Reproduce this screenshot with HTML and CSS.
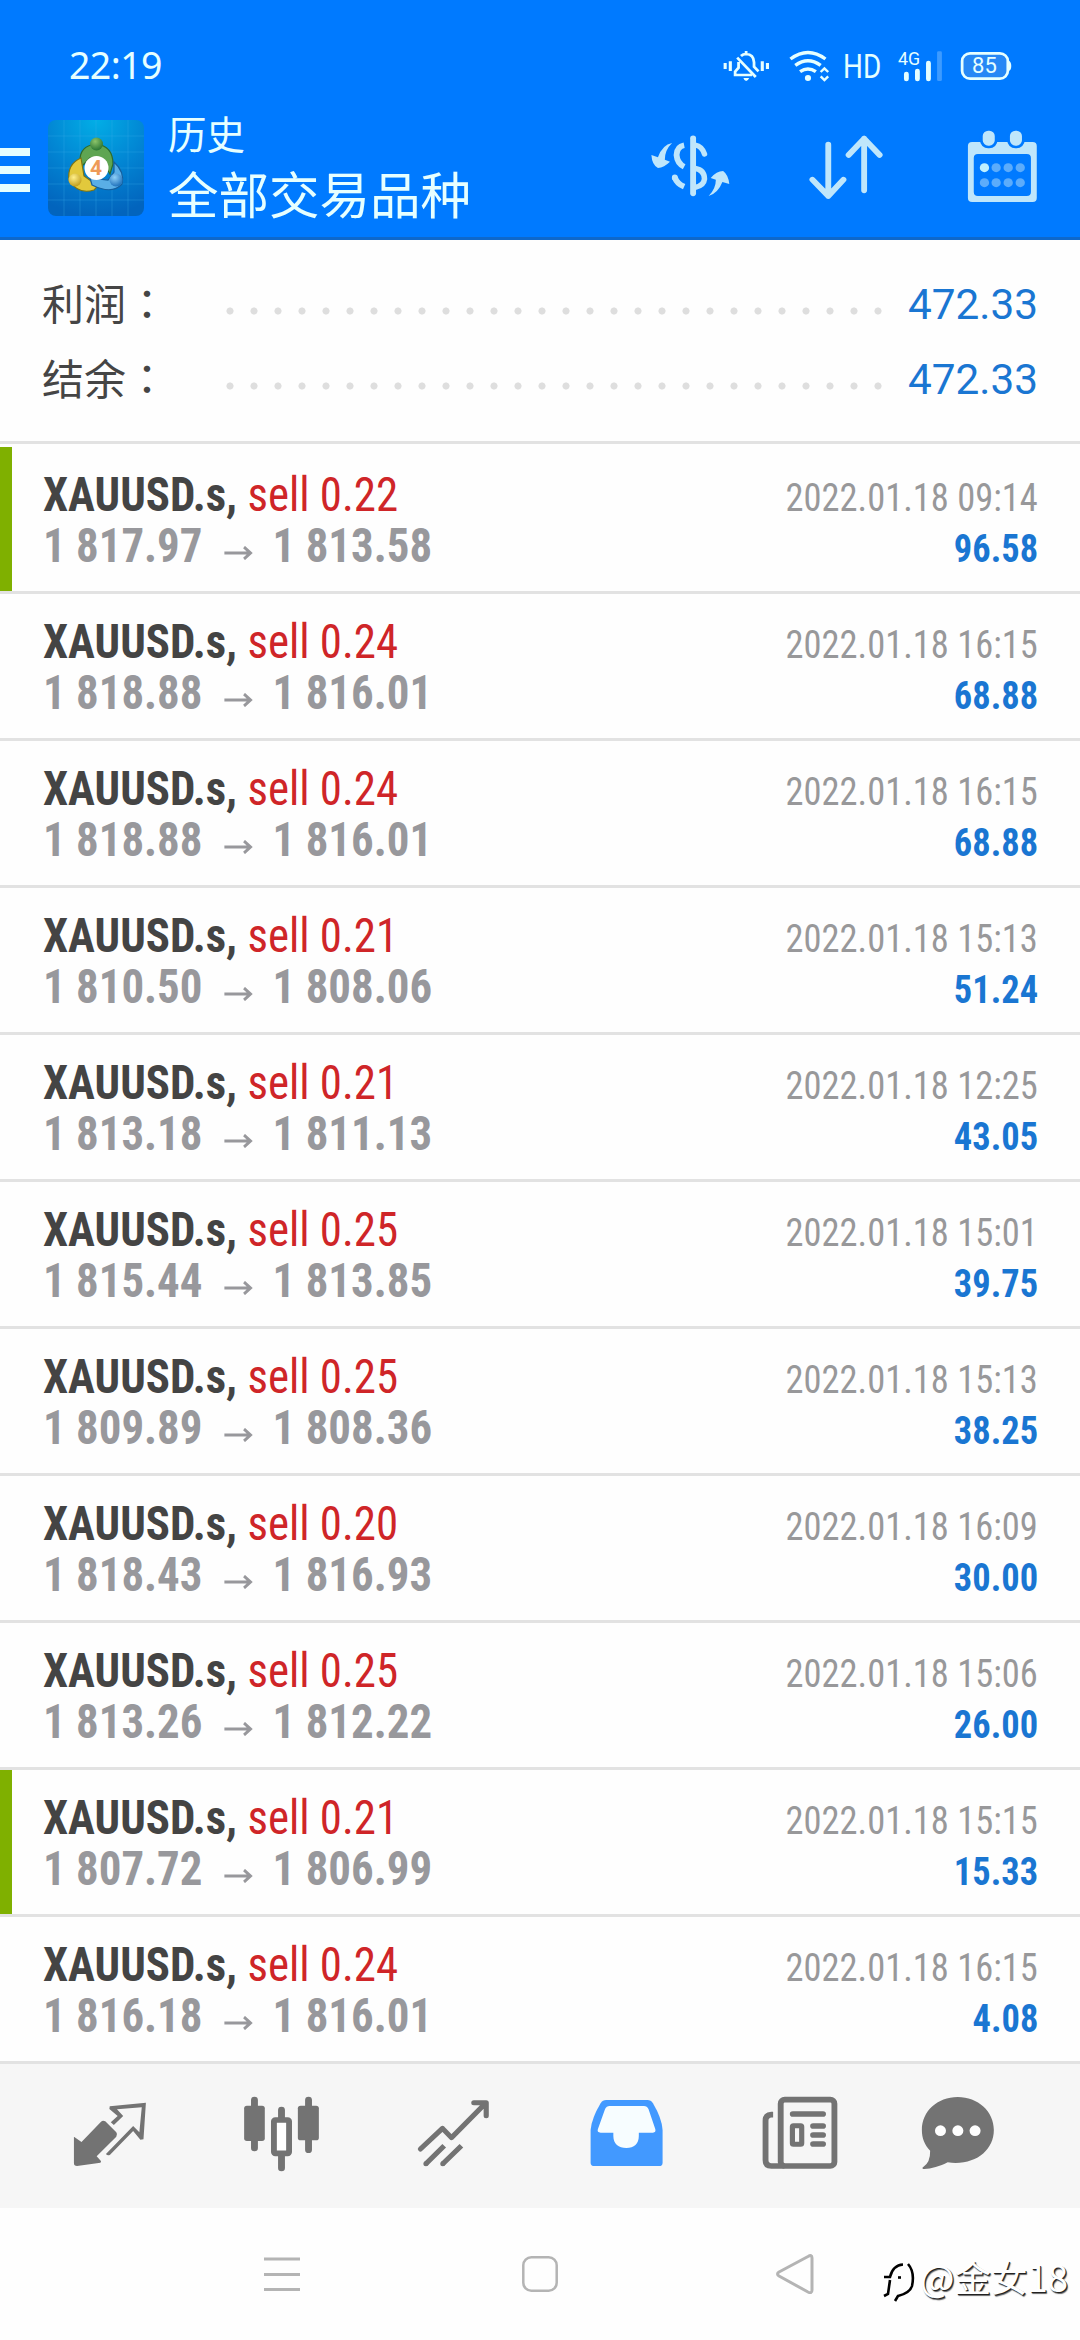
FILE: index.html
```html
<!DOCTYPE html>
<html lang="zh-CN">
<head>
<meta charset="utf-8">
<title>历史</title>
<link rel="stylesheet" href="styles.css">
</head>
<body>
<div class="screen">
  <header class="header">
    <div class="status">
      <span class="clock">22:19</span>
      <svg class="st-bell" viewBox="523 144 160 105" preserveAspectRatio="none" fill="none" stroke="#e6ffff" stroke-width="8">
        <path d="M538 189V207M553 184V213M646 184V213M661 189V207" stroke-width="9"/>
        <path d="M599 153V161M584 168Q590 162 599 162Q621 163 622 187V200L635 214M577 186V203L567 215V225H616M573 173L627 231"/>
        <path d="M591 234H608Q604 243 599 243Q594 243 591 234Z" fill="#e6ffff" stroke="none"/>
      </svg>
      <svg class="st-wifi" viewBox="711 144 140 105" preserveAspectRatio="none" fill="none" stroke="#e6ffff" stroke-width="10">
        <path d="M727 177Q778 138 829 177M741 196Q778 168 815 196M755 215Q778 199 801 215"/>
        <circle cx="778" cy="234" r="9" fill="#e6ffff" stroke="none"/>
        <path d="M815 216L826 205L837 216M815 229L826 240L837 229" stroke-width="7"/>
      </svg>
      <span class="hd">HD</span>
      <svg class="st-cell" viewBox="1031 144 145 105" preserveAspectRatio="none">
        <text class="g4" x="1040" y="195" textLength="64" lengthAdjust="spacingAndGlyphs">4G</text>
        <path d="M1064 222V237M1096 213V237M1128 189V237" stroke="#e6ffff" stroke-width="14" stroke-linecap="round"/>
        <rect x="1153" y="154" width="14" height="89" rx="4" fill="#3d9bff"/>
      </svg>
      <svg class="st-bat" viewBox="1214 144 163 105" preserveAspectRatio="none">
        <rect x="1226" y="160" width="133" height="76" rx="23" fill="#2688f5" stroke="#e6ffff" stroke-width="8"/>
        <path d="M1361 182Q1369 184 1369 198Q1369 211 1361 213Z" fill="#e6ffff"/>
        <text class="pct" x="1255" y="220" textLength="72" lengthAdjust="spacingAndGlyphs">85</text>
      </svg>
    </div>
    <div class="toolbar">
      <div class="burger"><i></i><i></i><i></i></div>
      <svg class="logo" viewBox="0 0 96 96">
        <defs>
          <radialGradient id="bg" cx=".5" cy="0" r="1"><stop offset="0" stop-color="#02aee6"/><stop offset=".55" stop-color="#0283d2"/><stop offset="1" stop-color="#0264bd"/></radialGradient>
          <radialGradient id="gr" cx=".4" cy=".3" r=".8"><stop offset="0" stop-color="#8cc46a"/><stop offset="1" stop-color="#1d6b2c"/></radialGradient>
          <radialGradient id="ye" cx=".4" cy=".3" r=".8"><stop offset="0" stop-color="#fff08a"/><stop offset="1" stop-color="#b99310"/></radialGradient>
          <radialGradient id="bl" cx=".4" cy=".3" r=".8"><stop offset="0" stop-color="#8fd0f8"/><stop offset="1" stop-color="#1165b4"/></radialGradient>
        </defs>
        <rect width="96" height="96" rx="8" fill="url(#bg)"/>
        <path d="M0 16H96M0 32H96M0 48H96M0 64H96M0 80H96M16 0V96M32 0V96M48 0V96M64 0V96M80 0V96" stroke="#3fb0ea" stroke-opacity=".3"/>
        <g stroke-width="1.200">
          <path d="M32 42Q31 26 48 24Q65 26 65 44L62 54L54 40L42 38L34 46Z" fill="#5fa552" stroke="#2e6b2c"/>
          <path d="M33 38Q19 44 21 60Q30 75 46 70L50 66L36 56Z" fill="#e2c93c" stroke="#7e7412"/>
          <path d="M66 42Q77 52 74 64Q64 75 44 65L42 58L60 60L66 52Z" fill="#5aaee6" stroke="#155f9e"/>
        </g>
        <circle cx="48.500" cy="24" r="6.500" fill="url(#gr)"/>
        <circle cx="27" cy="60" r="6.500" fill="url(#ye)"/>
        <circle cx="68" cy="60" r="6.500" fill="url(#bl)"/>
        <circle cx="48.500" cy="48" r="12" fill="#fff"/>
        <text class="four" x="48" y="55" text-anchor="middle">4</text>
      </svg>
      <div class="titles">
        <div class="t1">历史</div>
        <div class="t2">全部交易品种</div>
      </div>
      <div class="actions">
        <svg class="a-money" viewBox="290 390 290 228" preserveAspectRatio="none" fill="none" stroke="#bfe6fb">
          <path d="M444 415V580" stroke-width="17" stroke-linecap="round"/>
          <path d="M418 436Q397 440 396 465Q398 490 418 500M391 532Q397 551 418 560" stroke-width="17"/>
          <path d="M391 532L391 534" stroke-width="17" stroke-linecap="round"/>
          <path d="M450 435Q470 439 477 462M450 505Q477 510 477 537Q475 557 450 562" stroke-width="16" stroke-linecap="round"/>
          <path d="M383 429Q355 434 342 472L323 465Q325 495 342 504Q360 502 377 485L362 479Q362 450 383 429Z" fill="#bfe6fb" stroke="none"/>
          <path d="M489 588Q516 580 529 546L549 552Q546 524 531 513Q512 513 495 534L510 539Q510 566 489 588Z" fill="#bfe6fb" stroke="none"/>
        </svg>
        <svg class="a-sort" viewBox="755 390 261 228" preserveAspectRatio="none" fill="none" stroke="#bfe6fb" stroke-width="17" stroke-linecap="round" stroke-linejoin="round">
          <path d="M837 434V588M791 539L837 588L881 539M941 571V416M896 465L941 416L986 465"/>
        </svg>
        <svg class="a-cal" viewBox="1220 390 244 228" preserveAspectRatio="none">
          <path fill-rule="evenodd" fill="#bfe6fb" d="M1255 426H1431Q1443 426 1443 438V594Q1443 606 1431 606H1255Q1243 606 1243 594V438Q1243 426 1255 426ZM1272 462Q1260 462 1260 474V576Q1260 588 1272 588H1414Q1426 588 1426 576V474Q1426 462 1414 462Z"/>
          <rect x="1282" y="388" width="43" height="53" rx="20" fill="#bfe6fb" stroke="#007aff" stroke-width="8"/>
          <rect x="1361" y="388" width="43" height="53" rx="20" fill="#bfe6fb" stroke="#007aff" stroke-width="8"/>
          <g fill="#5cacfb"><circle cx="1325" cy="503" r="13.500"/><circle cx="1360" cy="503" r="13.500"/><circle cx="1395" cy="503" r="13.500"/><circle cx="1291" cy="548" r="13.500"/><circle cx="1325" cy="548" r="13.500"/><circle cx="1360" cy="548" r="13.500"/><circle cx="1395" cy="548" r="13.500"/></g>
          <circle cx="1291" cy="503" r="13.500" fill="#bff0ff"/>
        </svg>
      </div>
    </div>
  </header>

  <section class="summary">
    <div class="sum"><span class="label">利润<b lang="zh-TW">：</b></span><i class="leader"></i><span class="total">472.33</span></div>
    <div class="sum"><span class="label">结余<b lang="zh-TW">：</b></span><i class="leader"></i><span class="total">472.33</span></div>
  </section>

  <main class="deals" id="deals"></main>

  <nav class="tabs">
    <svg viewBox="70 42 499.500 432" preserveAspectRatio="none" fill="#737373">
      <path d="M215 260L237 276L293 216Q299 209 306 214L338 247Q343 254 338 260L281 319L294 334L292 338L224 348Q215 348 215 340Z"/>
      <path d="M319 169L424 158L417 268L408 269L387 243L320 314Q313 319 308 312L387 228L405 247L412 172L340 178L358 198L331 225L322 217L342 198L318 177Z"/>
    </svg>
    <svg viewBox="569.200 42 499.500 432" preserveAspectRatio="none" fill="#737373">
      <path d="M739 150V294M896 150V299M817.500 180V210M817.500 310V354" stroke="#737373" stroke-width="20" stroke-linecap="round"/>
      <rect x="709" y="167" width="60" height="106" rx="8"/><rect x="865" y="167" width="61" height="104" rx="8"/>
      <rect x="795.500" y="210" width="44" height="100" rx="4" fill="#fff" stroke="#737373" stroke-width="17"/>
    </svg>
    <svg viewBox="1068.700 42 499.500 432" preserveAspectRatio="none" fill="none" stroke="#737373" stroke-width="15" stroke-linejoin="round">
      <path d="M1221 297L1285 235L1311 263L1410 160M1376 158H1412V197" stroke-linecap="round"/>
      <path d="M1237 341L1290 287M1286 341L1340 287"/>
      <path d="M1237 341V341.100M1286 341V341.100" stroke-linecap="round"/>
    </svg>
    <svg viewBox="0 42 499.500 432" preserveAspectRatio="none" fill="#4299ff">
      <path d="M192 150H312Q322 150 328 160Q354 205 356 240V338Q356 348 346 348H158Q147 348 147 338V240Q150 205 176 160Q182 150 192 150Z"/>
      <path d="M202 168H302Q311 168 315 177L335 238Q337 248 328 248H287V258C287 282 273 294 251 294C228 294 213 282 213 258V248H176Q165 248 168 238L189 177Q193 168 202 168Z" fill="#f7fdff"/>
    </svg>
    <svg viewBox="499.500 42 499.500 432" preserveAspectRatio="none" fill="none" stroke="#737373" stroke-width="17">
      <rect x="699" y="149" width="156" height="199" rx="12"/>
      <path d="M677 194H672Q655 195 655 212V330Q655 348 672 348H710"/>
      <path d="M734 192H822M793 228H822M793 255H822M793 282H822" stroke-linecap="round"/>
      <rect x="733" y="227" width="27" height="56" rx="3" stroke-width="15"/>
    </svg>
    <svg viewBox="999 42 499.500 432" preserveAspectRatio="none" fill="#737373">
      <path d="M1213 141C1272 141 1318 184 1318 240C1318 302 1263 348 1184 337C1161 349 1133 358 1113 357Q1108 355 1113 351Q1134 336 1133 302C1117 285 1109 265 1109 240C1109 184 1154 141 1213 141Z"/>
      <g fill="#fff"><circle cx="1163" cy="242" r="16"/><circle cx="1213.500" cy="242" r="16"/><circle cx="1263.500" cy="242" r="16"/></g>
    </svg>
  </nav>

  <footer class="navbar">
    <svg viewBox="0 0 40 40" fill="none" stroke="#b4b4b4" stroke-width="3"><path d="M2 5H38M2 20.500H38M2 35.500H38"/></svg>
    <svg viewBox="0 0 40 40" fill="none" stroke="#b4b4b4" stroke-width="2.500"><rect x="3.300" y="3.300" width="33.400" height="33.400" rx="8"/></svg>
    <svg class="back" viewBox="0 0 40 40" fill="none" stroke="#b4b4b4" stroke-width="3" stroke-linejoin="round"><path d="M32 2.500Q36 0 36 4V36Q36 40 32 38L3 22Q0 20 3 18Z"/></svg>
  </footer>
  <div class="mark">
    <svg viewBox="0 0 34 42" fill="none" stroke="#000" stroke-width="2.600"><path d="M2 15H8Q11 3 21 2.500M8 18L6 32L2 34M26 2Q33 10 30 24Q28 31 16 34L13 39"/><path d="M16 15.500H19"/></svg>
    <span>@金女18</span>
  </div>
</div>
<script src="app.js"></script>
</body>
</html>
```
FILE: styles.css
```css
* { box-sizing: border-box; }
body { margin: 0; background: #fff; font-family: Roboto, "Noto Sans CJK SC", sans-serif; }
svg { display: block; flex: none; }
.screen { position: relative; width: 1080px; height: 2340px; overflow: hidden; display: flex; flex-direction: column; background: #fefefe; }

.header { flex: none; height: 240px; background: #007aff; border-bottom: 3px solid #0e68cb; color: #e6ffff; }
.status { height: 96px; display: flex; align-items: flex-start; padding: 48px 66px 0 69px; }
.clock { flex: 1; margin-top: -2px; font: 37.500px/37px "Noto Sans", sans-serif; letter-spacing: -.6px; }
.st-bell { width: 55px; height: 35px; margin-right: 10px; }
.st-wifi { width: 48px; height: 35px; margin-right: 10px; }
.hd { width: 42px; margin-right: 10px; font: 34px/36px Roboto, sans-serif; transform: scaleX(.82); transform-origin: left; }
.st-cell { width: 50px; height: 35px; margin-right: 13px; }
.st-bat { width: 56px; height: 35px; }
.g4 { font: 55px Roboto, sans-serif; fill: #e6ffff; }
.pct { font: 68px Roboto, sans-serif; fill: #e6ffff; }
.toolbar { display: flex; align-items: flex-start; height: 141px; }
.burger { width: 30px; margin: 52px 18px 0 0; display: flex; flex-direction: column; gap: 10px; }
.burger i { height: 8px; background: #e6ffff; }
.logo { width: 96px; height: 96px; margin-top: 24px; }
.four { font: bold 21px Roboto, sans-serif; fill: #ee9a58; }
.titles { flex: 1; padding: 12px 0 0 24px; }
.t1 { font-size: 38.500px; line-height: 56px; }
.t2 { font-size: 50.500px; line-height: 66px; white-space: nowrap; }
.actions { display: flex; padding: 34px 36px 0 0; }
.actions svg { height: 76px; }
.a-money { width: 100px; margin-right: 60px; }
.a-sort { width: 90px; margin-right: 70px; }
.a-cal { width: 84px; }

.summary { flex: none; height: 204px; padding: 25px 42px 0; border-bottom: 3px solid #e2e2e2; }
.sum { height: 75px; display: flex; align-items: center; }
.label { width: 176px; margin-top: -3px; font-size: 42px; color: #454545; }
.label b { font-weight: 400; font-family: "Noto Sans CJK TC", sans-serif; }
.leader { width: 672px; height: 8px; margin-top: 16px; background: radial-gradient(circle at 12px 4px, #dedede 3.200px, transparent 3.900px) 0 0 / 24px 8px; }
.total { flex: 1; margin-top: 3px; text-align: right; font-size: 42.300px; color: #1a76d2; }

.deals { padding-top: 3px; flex: none; }
.deal { height: 147px; padding: 22px 42px 0 43px; border-bottom: 3px solid #e2e2e2; display: flex; flex-direction: column; font-family: "Roboto Condensed", Roboto, sans-serif; font-stretch: 75%; }
.deal.hit { background: linear-gradient(#7fb000, #7fb000) 0 0 / 12px 144px no-repeat; }
.line { display: flex; justify-content: space-between; align-items: baseline; height: 51px; line-height: 51px; white-space: pre; }
.sym, .price { transform: scaleX(.935); transform-origin: left; }
.time, .gain { transform: scaleX(.935); transform-origin: right; }
.sym { font-size: 48px; font-weight: 700; color: #444; }
.side { font-weight: 400; color: #cf2528; }
.time { font-size: 39px; color: #98989a; }
.price { font-size: 48px; font-weight: 700; color: #98989c; display: flex; }
.arrow { width: 32px; height: 14px; margin: 26px 21px 0 22px; }
.gain { font-size: 39px; font-weight: 700; color: #1a76d2; }

.tabs { flex: none; height: 144px; padding-left: 24px; background: #f6f6f6; display: flex; }
.tabs svg { width: 172px; height: 144px; }
.navbar { flex: none; height: 132px; padding: 0 153px; display: grid; grid-template-columns: repeat(3, 258px); justify-items: center; align-items: center; background: #fefefe; }
.navbar svg { width: 40px; height: 40px; }
.navbar .back { margin-right: 4px; }
.mark { position: absolute; left: 882px; top: 2262px; display: flex; color: #fff; font: 36.500px/42px "Noto Sans CJK SC", sans-serif; text-shadow: 1px 1px 0 #222, 1.500px 1.500px 1px #666; white-space: nowrap; }
.mark span { margin-top: -6px; }
.mark svg { width: 34px; height: 42px; margin-right: 4px; }
```
FILE: app.js
```js
const deals = [
  ["0.22", "1 817.97", "1 813.58", "2022.01.18 09:14", "96.58", true],
  ["0.24", "1 818.88", "1 816.01", "2022.01.18 16:15", "68.88"],
  ["0.24", "1 818.88", "1 816.01", "2022.01.18 16:15", "68.88"],
  ["0.21", "1 810.50", "1 808.06", "2022.01.18 15:13", "51.24"],
  ["0.21", "1 813.18", "1 811.13", "2022.01.18 12:25", "43.05"],
  ["0.25", "1 815.44", "1 813.85", "2022.01.18 15:01", "39.75"],
  ["0.25", "1 809.89", "1 808.36", "2022.01.18 15:13", "38.25"],
  ["0.20", "1 818.43", "1 816.93", "2022.01.18 16:09", "30.00"],
  ["0.25", "1 813.26", "1 812.22", "2022.01.18 15:06", "26.00"],
  ["0.21", "1 807.72", "1 806.99", "2022.01.18 15:15", "15.33", true],
  ["0.24", "1 816.18", "1 816.01", "2022.01.18 16:15", "4.08"],
];
const arrow = '<svg class="arrow" viewBox="0 0 30 14" fill="none" stroke="#98989c" stroke-width="3"><path d="M0 7H28M21 1L28 7L21 13"/></svg>';
document.getElementById("deals").innerHTML = deals.map(([vol, from, to, time, gain, hit]) => `
  <div class="deal${hit ? " hit" : ""}">
    <div class="line"><span class="sym">XAUUSD.s, <span class="side">sell ${vol}</span></span><span class="time">${time}</span></div>
    <div class="line"><span class="price"><span>${from}</span>${arrow}<span>${to}</span></span><span class="gain">${gain}</span></div>
  </div>`).join("");
```
